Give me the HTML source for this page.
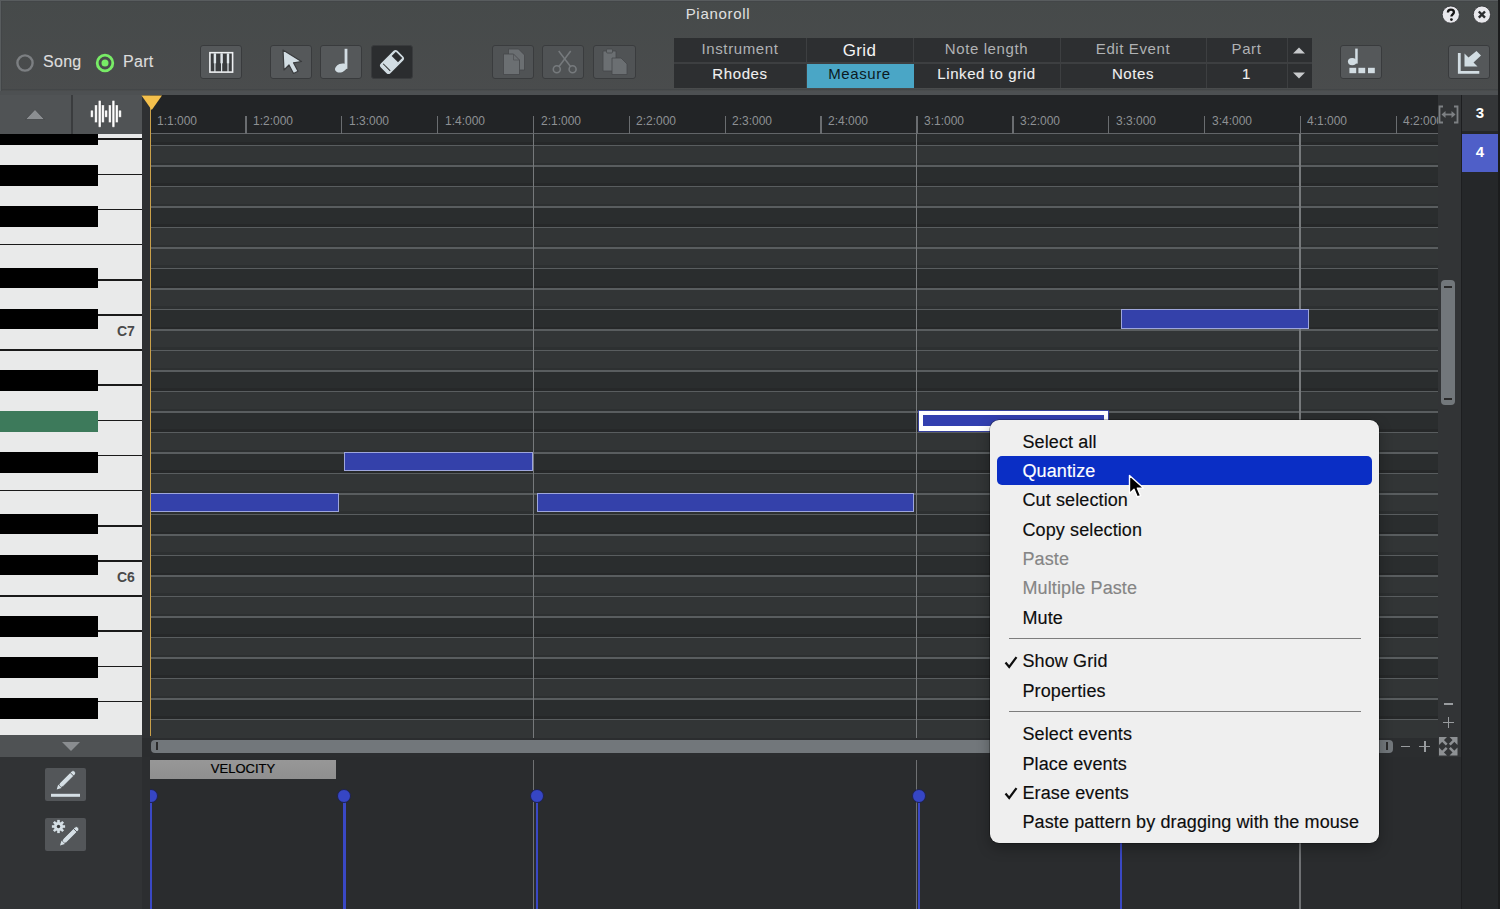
<!DOCTYPE html><html><head><meta charset="utf-8"><style>
*{margin:0;padding:0;box-sizing:border-box}
html,body{width:1500px;height:909px;overflow:hidden;background:#232527;font-family:"Liberation Sans",sans-serif}
body>div,body>svg{position:absolute}
.t{position:absolute;white-space:nowrap}
</style></head><body>
<div style="left:0px;top:0px;width:1498px;height:95px;background:linear-gradient(#464a4a,#4a4c4d)"></div>
<div style="left:0px;top:89px;width:1498px;height:1.2px;background:#434648"></div>
<div style="left:0px;top:0px;width:1498px;height:1px;background:#585c5e"></div>
<div style="left:0px;top:1px;width:1498px;height:1.2px;background:#434648"></div>
<div style="left:0px;top:0px;width:1px;height:95px;background:#585c5e"></div>
<div style="left:1px;top:1px;width:1.2px;height:94px;background:#434648"></div>
<div style="left:0px;top:90.5px;width:1498px;height:4px;background:#4d5052"></div>
<div class="t" style="left:0;width:1436px;top:5px;text-align:center;font-size:15px;letter-spacing:0.7px;color:#e0e0e0">Pianoroll</div>
<svg style="left:15px;top:53px" width="20" height="20"><circle cx="10" cy="10" r="7.6" fill="none" stroke="#7c7f82" stroke-width="2.4"/></svg>
<div class="t" style="left:43px;top:53px;font-size:16px;letter-spacing:0.3px;-webkit-text-stroke:0.15px #ddd;color:#dcdcdc">Song</div>
<svg style="left:95px;top:53px" width="20" height="20"><circle cx="10" cy="10" r="7.8" fill="none" stroke="#78ec66" stroke-width="2.8"/><circle cx="10" cy="10" r="3.5" fill="#78ec66"/></svg>
<div class="t" style="left:123px;top:53px;font-size:16px;letter-spacing:0.3px;-webkit-text-stroke:0.15px #ddd;color:#dcdcdc">Part</div>
<div style="left:200px;top:45px;width:42px;height:34px;background:#55585a;border:1.5px solid #393b3d;border-radius:3px"></div>
<svg style="left:205px;top:48px" width="32" height="28"><rect x="4.90" y="4.70" width="22.7" height="19.4" fill="#3a3c3e" stroke="#eef0f2" stroke-width="1.6"/><rect x="8.70" y="5.50" width="2.4" height="9.8" fill="#dfe6ea"/><rect x="9.30" y="5.50" width="1.2" height="18.6" fill="#dfe6ea"/><rect x="15.40" y="5.50" width="2.4" height="9.8" fill="#dfe6ea"/><rect x="16.00" y="5.50" width="1.2" height="18.6" fill="#dfe6ea"/><rect x="21.80" y="5.50" width="2.4" height="9.8" fill="#dfe6ea"/><rect x="22.40" y="5.50" width="1.2" height="18.6" fill="#dfe6ea"/></svg>
<div style="left:270px;top:45px;width:42px;height:34px;background:#55585a;border:1.5px solid #393b3d;border-radius:3px"></div>
<svg style="left:278px;top:45px" width="28" height="32"><polygon points="5,5 6,25 11,20 15.5,28.5 20,26.3 15.5,17.8 23.5,16.5" fill="#d2dde3" stroke="#3a3c3e" stroke-width="1.2" stroke-linejoin="round"/></svg>
<div style="left:320px;top:45px;width:42px;height:34px;background:#55585a;border:1.5px solid #393b3d;border-radius:3px"></div>
<svg style="left:330px;top:47px" width="22" height="28"><rect x="14.6" y="1.8" width="2.8" height="20" fill="#d2dde3"/><ellipse cx="11" cy="21" rx="6.3" ry="4.2" fill="#d2dde3" transform="rotate(-22 11 21)"/></svg>
<div style="left:371px;top:45px;width:42px;height:34px;background:#2b2d2f;border:1.5px solid #393b3d;border-radius:3px"></div>
<svg style="left:377px;top:48px" width="30" height="28"><g transform="rotate(-45 15 14)"><rect x="4" y="8" width="22" height="12" rx="2" fill="#d2dde3" stroke="#d2dde3" stroke-width="1.5"/><rect x="19" y="9.5" width="6" height="9" fill="#2b2d2f"/><line x1="7.5" y1="9" x2="7.5" y2="19" stroke="#2b2d2f" stroke-width="1"/></g></svg>
<div style="left:492px;top:45px;width:42px;height:34px;background:#505355;border:1px solid #3a3c3e;border-radius:3px"></div>
<svg style="left:500px;top:46px" width="30" height="32"><path d="M8.5 3 h10 l6 6 v15 h-16 z" fill="#6b6f72" stroke="#45484a" stroke-width="0.8"/><path d="M3.5 8 h10 l6 6 v14.5 h-16 z" fill="#6b6f72" stroke="#45484a" stroke-width="0.8"/><path d="M13.5 8 v6 h6" fill="none" stroke="#505355" stroke-width="0.8"/></svg>
<div style="left:542px;top:45px;width:42px;height:34px;background:#505355;border:1px solid #3a3c3e;border-radius:3px"></div>
<svg style="left:550px;top:48px" width="30" height="28"><line x1="8.7" y1="3" x2="20.5" y2="18.5" stroke="#767a7d" stroke-width="1.5"/><line x1="20.7" y1="3" x2="9" y2="18.5" stroke="#767a7d" stroke-width="1.5"/><circle cx="6.8" cy="21.2" r="3.5" fill="none" stroke="#767a7d" stroke-width="1.6"/><circle cx="22.6" cy="21.2" r="3.5" fill="none" stroke="#767a7d" stroke-width="1.6"/></svg>
<div style="left:593px;top:45px;width:43px;height:34px;background:#505355;border:1px solid #3a3c3e;border-radius:3px"></div>
<svg style="left:600px;top:46px" width="32" height="32"><path d="M3 5 h13 v20 h-13z" fill="#6b6f72" stroke="#45484a" stroke-width="0.8"/><rect x="6.5" y="3" width="6" height="4" rx="1" fill="#6b6f72" stroke="#45484a" stroke-width="0.8"/><path d="M12 12 h9 l6 6 v10.5 h-15z" fill="#6b6f72" stroke="#45484a" stroke-width="0.8"/></svg>
<div style="left:674px;top:37.5px;width:638px;height:50.5px;background:#2d2f31"></div>
<div style="left:674px;top:62px;width:638px;height:1.5px;background:#3d3f41"></div>
<div style="left:806px;top:37.5px;width:1px;height:50.5px;background:#3d3f41"></div>
<div style="left:913px;top:37.5px;width:1px;height:50.5px;background:#3d3f41"></div>
<div style="left:1060px;top:37.5px;width:1px;height:50.5px;background:#3d3f41"></div>
<div style="left:1206px;top:37.5px;width:1px;height:50.5px;background:#3d3f41"></div>
<div style="left:1287px;top:37.5px;width:1px;height:50.5px;background:#3d3f41"></div>
<div style="left:807px;top:63.8px;width:106.5px;height:24px;background:#4aa6c6"></div>
<div class="t" style="left:674px;width:132px;text-align:center;top:40px;font-size:15px;letter-spacing:0.6px;color:#b0b2b4">Instrument</div>
<div class="t" style="left:806px;width:107px;text-align:center;top:40.5px;font-size:17px;letter-spacing:0.3px;color:#f4f4f4">Grid</div>
<div class="t" style="left:913px;width:147px;text-align:center;top:40px;font-size:15px;letter-spacing:0.6px;color:#b0b2b4">Note length</div>
<div class="t" style="left:1060px;width:146px;text-align:center;top:40px;font-size:15px;letter-spacing:0.6px;color:#b0b2b4">Edit Event</div>
<div class="t" style="left:1206px;width:81px;text-align:center;top:40px;font-size:15px;letter-spacing:0.6px;color:#b0b2b4">Part</div>
<div class="t" style="left:674px;width:132px;text-align:center;top:65px;font-size:15px;letter-spacing:0.6px;-webkit-text-stroke:0.1px currentColor;color:#f0f0f0">Rhodes</div>
<div class="t" style="left:806px;width:107px;text-align:center;top:65px;font-size:15px;letter-spacing:0.6px;color:#0c1a22">Measure</div>
<div class="t" style="left:913px;width:147px;text-align:center;top:65px;font-size:15px;letter-spacing:0.6px;-webkit-text-stroke:0.1px currentColor;color:#f0f0f0">Linked to grid</div>
<div class="t" style="left:1060px;width:146px;text-align:center;top:65px;font-size:15px;letter-spacing:0.6px;-webkit-text-stroke:0.1px currentColor;color:#f0f0f0">Notes</div>
<div class="t" style="left:1206px;width:81px;text-align:center;top:65px;font-size:15px;letter-spacing:0.6px;-webkit-text-stroke:0.1px currentColor;color:#f0f0f0">1</div>
<svg style="left:1291px;top:45px" width="16" height="10"><polygon points="2,8.5 8,2.5 14,8.5" fill="#c8cacc"/></svg>
<svg style="left:1291px;top:70.5px" width="16" height="10"><polygon points="2,1.5 14,1.5 8,7.5" fill="#c8cacc"/></svg>
<div style="left:1340px;top:44.5px;width:42px;height:34.5px;background:#55585a;border:1.5px solid #393b3d;border-radius:3px"></div>
<svg style="left:1345px;top:47px" width="32" height="28"><rect x="10.2" y="1.6" width="2.5" height="15" fill="#d2dde3"/><ellipse cx="7.2" cy="14.6" rx="4.3" ry="3.6" fill="#d2dde3"/><rect x="4.4" y="20.8" width="6.8" height="5.4" fill="#d2dde3"/><rect x="13.4" y="20.8" width="6.8" height="5.4" fill="#d2dde3"/><rect x="23" y="20.8" width="6.8" height="5.4" fill="#d2dde3"/></svg>
<div style="left:1448px;top:44.5px;width:42px;height:34.5px;background:#55585a;border:1.5px solid #393b3d;border-radius:3px"></div>
<svg style="left:1455px;top:48px" width="30" height="28"><path d="M4.3 5 v19.3 h20" fill="none" stroke="#d2dde3" stroke-width="2.8"/><polygon points="21.5,3 26,7.5 18.5,14.5 22.5,18.5 9.5,18.5 9.5,5.5 13.5,9.5" fill="#d2dde3"/></svg>
<svg style="left:1441px;top:5px" width="20" height="20"><circle cx="9.8" cy="9.6" r="8.6" fill="#e8e8ec" stroke="#2e3032" stroke-width="0.8"/><path d="M6.9 7.6 C6.9 5.3 8.3 4.6 9.9 4.6 C11.7 4.6 12.9 5.7 12.9 7.2 C12.9 9.3 10.4 9.4 10.4 11.6" fill="none" stroke="#141414" stroke-width="2.3"/><circle cx="10.4" cy="14.6" r="1.4" fill="#141414"/></svg>
<svg style="left:1471.5px;top:5px" width="20" height="20"><circle cx="9.9" cy="9.6" r="8.6" fill="#e8e8ec" stroke="#2e3032" stroke-width="0.8"/><path d="M6.8 6.5 L13 12.7 M13 6.5 L6.8 12.7" stroke="#2a2c2e" stroke-width="2.4"/></svg>

<div style="left:0px;top:95px;width:142px;height:39px;background:#505355"></div>
<div style="left:71px;top:95px;width:2px;height:39px;background:#3a3c3e"></div>
<svg style="left:24px;top:108px" width="22" height="12"><polygon points="1.5,11.5 11,1.5 20.5,11.5" fill="#8b8e91" stroke="#45484a" stroke-width="0.8"/></svg>
<svg style="left:88px;top:98px" width="36" height="32"><rect x="2.600000000000006" y="12.299999999999997" width="2.6" height="7" rx="0.6" fill="#fff" stroke="rgba(20,20,20,0.35)" stroke-width="0.6"/><rect x="6.7" y="6.9999999999999964" width="2.6" height="17.6" rx="0.6" fill="#fff" stroke="rgba(20,20,20,0.35)" stroke-width="0.6"/><rect x="10.400000000000002" y="2.4499999999999975" width="2.6" height="26.7" rx="0.6" fill="#fff" stroke="rgba(20,20,20,0.35)" stroke-width="0.6"/><rect x="13.600000000000005" y="6.9999999999999964" width="2.6" height="17.6" rx="0.6" fill="#fff" stroke="rgba(20,20,20,0.35)" stroke-width="0.6"/><rect x="16.799999999999994" y="12.299999999999997" width="2.6" height="7" rx="0.6" fill="#fff" stroke="rgba(20,20,20,0.35)" stroke-width="0.6"/><rect x="20.600000000000005" y="6.9999999999999964" width="2.6" height="17.6" rx="0.6" fill="#fff" stroke="rgba(20,20,20,0.35)" stroke-width="0.6"/><rect x="24.100000000000005" y="2.4499999999999975" width="2.6" height="26.7" rx="0.6" fill="#fff" stroke="rgba(20,20,20,0.35)" stroke-width="0.6"/><rect x="27.499999999999996" y="6.9999999999999964" width="2.6" height="17.6" rx="0.6" fill="#fff" stroke="rgba(20,20,20,0.35)" stroke-width="0.6"/><rect x="30.7" y="12.299999999999997" width="2.6" height="7" rx="0.6" fill="#fff" stroke="rgba(20,20,20,0.35)" stroke-width="0.6"/></svg>
<div style="left:142px;top:95px;width:1296px;height:39px;background:#222426"></div>
<div style="left:150px;top:133.3px;width:1288px;height:1.3px;background:#626568"></div>
<div class="t" style="left:157px;top:113.8px;font-size:12px;color:#8e9194">1:1:000</div>
<div style="left:245.175px;top:116px;width:1.4px;height:18px;background:#6a6d70"></div>
<div class="t" style="left:253px;top:113.8px;font-size:12px;color:#8e9194">1:2:000</div>
<div style="left:341.05px;top:116px;width:1.4px;height:18px;background:#6a6d70"></div>
<div class="t" style="left:349px;top:113.8px;font-size:12px;color:#8e9194">1:3:000</div>
<div style="left:436.925px;top:116px;width:1.4px;height:18px;background:#6a6d70"></div>
<div class="t" style="left:445px;top:113.8px;font-size:12px;color:#8e9194">1:4:000</div>
<div style="left:532.8px;top:116px;width:1.4px;height:18px;background:#6a6d70"></div>
<div class="t" style="left:541px;top:113.8px;font-size:12px;color:#8e9194">2:1:000</div>
<div style="left:628.675px;top:116px;width:1.4px;height:18px;background:#6a6d70"></div>
<div class="t" style="left:636px;top:113.8px;font-size:12px;color:#8e9194">2:2:000</div>
<div style="left:724.55px;top:116px;width:1.4px;height:18px;background:#6a6d70"></div>
<div class="t" style="left:732px;top:113.8px;font-size:12px;color:#8e9194">2:3:000</div>
<div style="left:820.425px;top:116px;width:1.4px;height:18px;background:#6a6d70"></div>
<div class="t" style="left:828px;top:113.8px;font-size:12px;color:#8e9194">2:4:000</div>
<div style="left:916.3px;top:116px;width:1.4px;height:18px;background:#6a6d70"></div>
<div class="t" style="left:924px;top:113.8px;font-size:12px;color:#8e9194">3:1:000</div>
<div style="left:1012.175px;top:116px;width:1.4px;height:18px;background:#6a6d70"></div>
<div class="t" style="left:1020px;top:113.8px;font-size:12px;color:#8e9194">3:2:000</div>
<div style="left:1108.05px;top:116px;width:1.4px;height:18px;background:#6a6d70"></div>
<div class="t" style="left:1116px;top:113.8px;font-size:12px;color:#8e9194">3:3:000</div>
<div style="left:1203.925px;top:116px;width:1.4px;height:18px;background:#6a6d70"></div>
<div class="t" style="left:1212px;top:113.8px;font-size:12px;color:#8e9194">3:4:000</div>
<div style="left:1299.8px;top:116px;width:1.4px;height:18px;background:#6a6d70"></div>
<div class="t" style="left:1307px;top:113.8px;font-size:12px;color:#8e9194">4:1:000</div>
<div style="left:1395.675px;top:116px;width:1.4px;height:18px;background:#6a6d70"></div>
<div class="t" style="left:1403px;top:113.8px;font-size:12px;color:#8e9194">4:2:000</div>

<div style="left:150px;top:134px;width:1288px;height:604px;overflow:hidden;background:#2e3132"><div style="position:absolute;left:0;top:585.5px;width:1288px;height:18.5px;background:#323536"></div><div style="position:absolute;left:0;top:565.0px;width:1288px;height:20.5px;background:#2a2d2e"></div><div style="position:absolute;left:0;top:544.5px;width:1288px;height:20.5px;background:#323536"></div><div style="position:absolute;left:0;top:524.0px;width:1288px;height:20.5px;background:#2a2d2e"></div><div style="position:absolute;left:0;top:503.5px;width:1288px;height:20.5px;background:#323536"></div><div style="position:absolute;left:0;top:483.0px;width:1288px;height:20.5px;background:#2a2d2e"></div><div style="position:absolute;left:0;top:462.5px;width:1288px;height:20.5px;background:#323536"></div><div style="position:absolute;left:0;top:442.0px;width:1288px;height:20.5px;background:#323536"></div><div style="position:absolute;left:0;top:421.5px;width:1288px;height:20.5px;background:#2a2d2e"></div><div style="position:absolute;left:0;top:401.0px;width:1288px;height:20.5px;background:#323536"></div><div style="position:absolute;left:0;top:380.5px;width:1288px;height:20.5px;background:#2a2d2e"></div><div style="position:absolute;left:0;top:360.0px;width:1288px;height:20.5px;background:#323536"></div><div style="position:absolute;left:0;top:339.5px;width:1288px;height:20.5px;background:#323536"></div><div style="position:absolute;left:0;top:319.0px;width:1288px;height:20.5px;background:#2a2d2e"></div><div style="position:absolute;left:0;top:298.5px;width:1288px;height:20.5px;background:#323536"></div><div style="position:absolute;left:0;top:278.0px;width:1288px;height:20.5px;background:#2a2d2e"></div><div style="position:absolute;left:0;top:257.5px;width:1288px;height:20.5px;background:#323536"></div><div style="position:absolute;left:0;top:237.0px;width:1288px;height:20.5px;background:#2a2d2e"></div><div style="position:absolute;left:0;top:216.5px;width:1288px;height:20.5px;background:#323536"></div><div style="position:absolute;left:0;top:196.0px;width:1288px;height:20.5px;background:#323536"></div><div style="position:absolute;left:0;top:175.5px;width:1288px;height:20.5px;background:#2a2d2e"></div><div style="position:absolute;left:0;top:155.0px;width:1288px;height:20.5px;background:#323536"></div><div style="position:absolute;left:0;top:134.5px;width:1288px;height:20.5px;background:#2a2d2e"></div><div style="position:absolute;left:0;top:114.0px;width:1288px;height:20.5px;background:#323536"></div><div style="position:absolute;left:0;top:93.5px;width:1288px;height:20.5px;background:#323536"></div><div style="position:absolute;left:0;top:73.0px;width:1288px;height:20.5px;background:#2a2d2e"></div><div style="position:absolute;left:0;top:52.5px;width:1288px;height:20.5px;background:#323536"></div><div style="position:absolute;left:0;top:32.0px;width:1288px;height:20.5px;background:#2a2d2e"></div><div style="position:absolute;left:0;top:11.5px;width:1288px;height:20.5px;background:#323536"></div><div style="position:absolute;left:0;top:0px;width:1288px;height:11.5px;background:#2a2d2e"></div><div style="position:absolute;left:0;top:582.1px;width:1288px;height:2.5px;background:rgba(0,0,0,0.09)"></div><div style="position:absolute;left:0;top:584.6px;width:1288px;height:1.6px;background:#595d5f"></div><div style="position:absolute;left:0;top:561.6px;width:1288px;height:2.5px;background:rgba(0,0,0,0.09)"></div><div style="position:absolute;left:0;top:564.1px;width:1288px;height:1.6px;background:#595d5f"></div><div style="position:absolute;left:0;top:541.1px;width:1288px;height:2.5px;background:rgba(0,0,0,0.09)"></div><div style="position:absolute;left:0;top:543.6px;width:1288px;height:1.6px;background:#595d5f"></div><div style="position:absolute;left:0;top:520.6px;width:1288px;height:2.5px;background:rgba(0,0,0,0.09)"></div><div style="position:absolute;left:0;top:523.1px;width:1288px;height:1.6px;background:#595d5f"></div><div style="position:absolute;left:0;top:500.1px;width:1288px;height:2.5px;background:rgba(0,0,0,0.09)"></div><div style="position:absolute;left:0;top:502.6px;width:1288px;height:1.6px;background:#595d5f"></div><div style="position:absolute;left:0;top:479.6px;width:1288px;height:2.5px;background:rgba(0,0,0,0.09)"></div><div style="position:absolute;left:0;top:482.1px;width:1288px;height:1.6px;background:#595d5f"></div><div style="position:absolute;left:0;top:459.1px;width:1288px;height:2.5px;background:rgba(0,0,0,0.09)"></div><div style="position:absolute;left:0;top:461.6px;width:1288px;height:1.6px;background:#595d5f"></div><div style="position:absolute;left:0;top:438.6px;width:1288px;height:2.5px;background:rgba(0,0,0,0.09)"></div><div style="position:absolute;left:0;top:441.1px;width:1288px;height:1.6px;background:#595d5f"></div><div style="position:absolute;left:0;top:418.1px;width:1288px;height:2.5px;background:rgba(0,0,0,0.09)"></div><div style="position:absolute;left:0;top:420.6px;width:1288px;height:1.6px;background:#595d5f"></div><div style="position:absolute;left:0;top:397.6px;width:1288px;height:2.5px;background:rgba(0,0,0,0.09)"></div><div style="position:absolute;left:0;top:400.1px;width:1288px;height:1.6px;background:#595d5f"></div><div style="position:absolute;left:0;top:377.1px;width:1288px;height:2.5px;background:rgba(0,0,0,0.09)"></div><div style="position:absolute;left:0;top:379.6px;width:1288px;height:1.6px;background:#595d5f"></div><div style="position:absolute;left:0;top:356.6px;width:1288px;height:2.5px;background:rgba(0,0,0,0.09)"></div><div style="position:absolute;left:0;top:359.1px;width:1288px;height:1.6px;background:#595d5f"></div><div style="position:absolute;left:0;top:336.1px;width:1288px;height:2.5px;background:rgba(0,0,0,0.09)"></div><div style="position:absolute;left:0;top:338.6px;width:1288px;height:1.6px;background:#595d5f"></div><div style="position:absolute;left:0;top:315.6px;width:1288px;height:2.5px;background:rgba(0,0,0,0.09)"></div><div style="position:absolute;left:0;top:318.1px;width:1288px;height:1.6px;background:#595d5f"></div><div style="position:absolute;left:0;top:295.1px;width:1288px;height:2.5px;background:rgba(0,0,0,0.09)"></div><div style="position:absolute;left:0;top:297.6px;width:1288px;height:1.6px;background:#595d5f"></div><div style="position:absolute;left:0;top:274.6px;width:1288px;height:2.5px;background:rgba(0,0,0,0.09)"></div><div style="position:absolute;left:0;top:277.1px;width:1288px;height:1.6px;background:#595d5f"></div><div style="position:absolute;left:0;top:254.1px;width:1288px;height:2.5px;background:rgba(0,0,0,0.09)"></div><div style="position:absolute;left:0;top:256.6px;width:1288px;height:1.6px;background:#595d5f"></div><div style="position:absolute;left:0;top:233.6px;width:1288px;height:2.5px;background:rgba(0,0,0,0.09)"></div><div style="position:absolute;left:0;top:236.1px;width:1288px;height:1.6px;background:#595d5f"></div><div style="position:absolute;left:0;top:213.1px;width:1288px;height:2.5px;background:rgba(0,0,0,0.09)"></div><div style="position:absolute;left:0;top:215.6px;width:1288px;height:1.6px;background:#595d5f"></div><div style="position:absolute;left:0;top:192.6px;width:1288px;height:2.5px;background:rgba(0,0,0,0.09)"></div><div style="position:absolute;left:0;top:195.1px;width:1288px;height:1.6px;background:#595d5f"></div><div style="position:absolute;left:0;top:172.1px;width:1288px;height:2.5px;background:rgba(0,0,0,0.09)"></div><div style="position:absolute;left:0;top:174.6px;width:1288px;height:1.6px;background:#595d5f"></div><div style="position:absolute;left:0;top:151.6px;width:1288px;height:2.5px;background:rgba(0,0,0,0.09)"></div><div style="position:absolute;left:0;top:154.1px;width:1288px;height:1.6px;background:#595d5f"></div><div style="position:absolute;left:0;top:131.1px;width:1288px;height:2.5px;background:rgba(0,0,0,0.09)"></div><div style="position:absolute;left:0;top:133.6px;width:1288px;height:1.6px;background:#595d5f"></div><div style="position:absolute;left:0;top:110.6px;width:1288px;height:2.5px;background:rgba(0,0,0,0.09)"></div><div style="position:absolute;left:0;top:113.1px;width:1288px;height:1.6px;background:#595d5f"></div><div style="position:absolute;left:0;top:90.1px;width:1288px;height:2.5px;background:rgba(0,0,0,0.09)"></div><div style="position:absolute;left:0;top:92.6px;width:1288px;height:1.6px;background:#595d5f"></div><div style="position:absolute;left:0;top:69.6px;width:1288px;height:2.5px;background:rgba(0,0,0,0.09)"></div><div style="position:absolute;left:0;top:72.1px;width:1288px;height:1.6px;background:#595d5f"></div><div style="position:absolute;left:0;top:49.1px;width:1288px;height:2.5px;background:rgba(0,0,0,0.09)"></div><div style="position:absolute;left:0;top:51.6px;width:1288px;height:1.6px;background:#595d5f"></div><div style="position:absolute;left:0;top:28.6px;width:1288px;height:2.5px;background:rgba(0,0,0,0.09)"></div><div style="position:absolute;left:0;top:31.1px;width:1288px;height:1.6px;background:#595d5f"></div><div style="position:absolute;left:0;top:8.1px;width:1288px;height:2.5px;background:rgba(0,0,0,0.09)"></div><div style="position:absolute;left:0;top:10.6px;width:1288px;height:1.6px;background:#595d5f"></div></div>
<div style="left:532.5999999999999px;top:134px;width:1.4px;height:604px;background:#76797b"></div>
<div style="left:916.0999999999999px;top:134px;width:1.4px;height:604px;background:#76797b"></div>
<div style="left:1299.2px;top:134px;width:1.4px;height:604px;background:#76797b"></div>
<div style="left:150px;top:493.3px;width:188.7px;height:19.19999999999999px;background:#3441aa;border:1px solid #9ea6dc"></div>
<div style="left:343.8px;top:452.2px;width:189.7px;height:19.30000000000001px;background:#3441aa;border:1px solid #9ea6dc"></div>
<div style="left:537px;top:493.3px;width:377px;height:19.19999999999999px;background:#3441aa;border:1px solid #9ea6dc"></div>
<div style="left:919.3px;top:411px;width:189.0px;height:20px;background:#3340b0;border:solid #fff;border-width:4.6px 4px 5.2px 4px;box-shadow:0 0 0 0.8px #3a46b8"></div>
<div style="left:1120.8px;top:308.5px;width:188.70000000000005px;height:20.0px;background:#3441aa;border:1px solid #9ea6dc"></div>
<div style="left:142px;top:95px;width:8px;height:643px;background:#2e3032"></div>
<div style="left:149.5px;top:100px;width:1.5px;height:636px;background:#c9a04a"></div>
<svg style="left:141px;top:95px" width="22" height="16"><polygon points="0.5,0.5 21,0.5 10.75,15" fill="#f4c04c"/></svg>
<div style="left:0;top:134px;width:142px;height:601px;overflow:hidden;background:#e9eaea"><div style="position:absolute;left:0;top:4.392857142857139px;width:142px;height:1.6px;background:#1a1a1a"></div><div style="position:absolute;left:0;top:39.53571428571428px;width:142px;height:1.6px;background:#1a1a1a"></div><div style="position:absolute;left:0;top:74.67857142857142px;width:142px;height:1.6px;background:#1a1a1a"></div><div style="position:absolute;left:0;top:109.82142857142856px;width:142px;height:1.6px;background:#1a1a1a"></div><div style="position:absolute;left:0;top:144.96428571428572px;width:142px;height:1.6px;background:#1a1a1a"></div><div style="position:absolute;left:0;top:180.1071428571429px;width:142px;height:1.6px;background:#1a1a1a"></div><div style="position:absolute;left:0;top:215.25000000000006px;width:142px;height:1.6px;background:#1a1a1a"></div><div style="position:absolute;left:0;top:250.39285714285722px;width:142px;height:1.6px;background:#1a1a1a"></div><div style="position:absolute;left:0;top:285.5357142857144px;width:142px;height:1.6px;background:#1a1a1a"></div><div style="position:absolute;left:0;top:320.67857142857156px;width:142px;height:1.6px;background:#1a1a1a"></div><div style="position:absolute;left:0;top:355.8214285714287px;width:142px;height:1.6px;background:#1a1a1a"></div><div style="position:absolute;left:0;top:390.9642857142859px;width:142px;height:1.6px;background:#1a1a1a"></div><div style="position:absolute;left:0;top:426.107142857143px;width:142px;height:1.6px;background:#1a1a1a"></div><div style="position:absolute;left:0;top:461.2500000000001px;width:142px;height:1.6px;background:#1a1a1a"></div><div style="position:absolute;left:0;top:496.3928571428572px;width:142px;height:1.6px;background:#1a1a1a"></div><div style="position:absolute;left:0;top:531.5357142857143px;width:142px;height:1.6px;background:#1a1a1a"></div><div style="position:absolute;left:0;top:566.6785714285714px;width:142px;height:1.6px;background:#1a1a1a"></div><div style="position:absolute;left:0;top:601.8214285714286px;width:142px;height:1.6px;background:#1a1a1a"></div><div style="position:absolute;left:0;top:564.2px;width:97.6px;height:20.5px;background:#000"></div><div style="position:absolute;left:0;top:523.2px;width:97.6px;height:20.5px;background:#000"></div><div style="position:absolute;left:0;top:482.2px;width:97.6px;height:20.5px;background:#000"></div><div style="position:absolute;left:0;top:420.7px;width:97.6px;height:20.5px;background:#000"></div><div style="position:absolute;left:0;top:379.7px;width:97.6px;height:20.5px;background:#000"></div><div style="position:absolute;left:0;top:318.2px;width:97.6px;height:20.5px;background:#000"></div><div style="position:absolute;left:0;top:277.2px;width:97.6px;height:20.5px;background:#3d7a5b"></div><div style="position:absolute;left:0;top:236.2px;width:97.6px;height:20.5px;background:#000"></div><div style="position:absolute;left:0;top:174.7px;width:97.6px;height:20.5px;background:#000"></div><div style="position:absolute;left:0;top:133.7px;width:97.6px;height:20.5px;background:#000"></div><div style="position:absolute;left:0;top:72.2px;width:97.6px;height:20.5px;background:#000"></div><div style="position:absolute;left:0;top:31.2px;width:97.6px;height:20.5px;background:#000"></div><div style="position:absolute;left:0;top:-0.8px;width:97.6px;height:11.5px;background:#000"></div><div class="t" style="left:117px;top:189.0px;font-size:14px;font-weight:bold;color:#4a4a4a">C7</div><div class="t" style="left:117px;top:435.0px;font-size:14px;font-weight:bold;color:#4a4a4a">C6</div></div>
<div style="left:0px;top:735px;width:142px;height:22px;background:#4f5254"></div>
<svg style="left:60px;top:741px" width="22" height="11"><polygon points="2,1 20,1 11,10" fill="#8a8d90"/></svg>
<div style="left:142px;top:738px;width:1296px;height:20px;background:#2b2d2f"></div>
<div style="left:151px;top:739.5px;width:1242px;height:13px;background:#72777b;border-radius:4px"></div>
<div style="left:156px;top:742px;width:2px;height:8px;background:#2a2a2a"></div>
<div style="left:1401px;top:745.5px;width:8.6px;height:1.9px;background:#999c9f"></div>
<div style="left:1419px;top:745.5px;width:11px;height:1.9px;background:#999c9f"></div>
<div style="left:1423.7px;top:740.7px;width:1.9px;height:11px;background:#999c9f"></div>

<div style="left:1386px;top:742px;width:2px;height:8px;background:#2a2a2a"></div>
<div style="left:1438px;top:95px;width:23px;height:663px;background:#323436"></div>
<div style="left:1441.4px;top:280.2px;width:13.2px;height:125px;background:#72777b;border-radius:4px"></div>
<div style="left:1444px;top:286px;width:8px;height:2px;background:#2a2a2a"></div>
<div style="left:1444px;top:398px;width:8px;height:2px;background:#2a2a2a"></div>
<svg style="left:1438px;top:105px" width="21" height="19"><path d="M5 1.5 H1.5 V17.5 H5 M16 1.5 H19.5 V17.5 H16" fill="none" stroke="#7d8083" stroke-width="1.8"/><path d="M5 9.5 H16" stroke="#7d8083" stroke-width="1.8"/><polygon points="3.5,9.5 7.5,6 7.5,13" fill="#7d8083"/><polygon points="17.5,9.5 13.5,6 13.5,13" fill="#7d8083"/></svg>
<div style="left:1443.5px;top:703px;width:9px;height:1.9px;background:#999c9f"></div>
<div style="left:1443px;top:721.5px;width:10.5px;height:1.9px;background:#999c9f"></div>
<div style="left:1447.5px;top:717px;width:1.9px;height:10.5px;background:#999c9f"></div>

<svg style="left:1439.3px;top:737px" width="18.5" height="18.5"><g fill="#8e9194"><g transform="translate(9.25 9.25) rotate(0) translate(-9.25 -9.25)"><g><polygon points="0,0 8,0 0,8" /><polygon points="1.8,3.6 3.6,1.8 8.6,6.8 6.8,8.6"/></g></g><g transform="translate(9.25 9.25) rotate(90) translate(-9.25 -9.25)"><g><polygon points="0,0 8,0 0,8" /><polygon points="1.8,3.6 3.6,1.8 8.6,6.8 6.8,8.6"/></g></g><g transform="translate(9.25 9.25) rotate(180) translate(-9.25 -9.25)"><g><polygon points="0,0 8,0 0,8" /><polygon points="1.8,3.6 3.6,1.8 8.6,6.8 6.8,8.6"/></g></g><g transform="translate(9.25 9.25) rotate(270) translate(-9.25 -9.25)"><g><polygon points="0,0 8,0 0,8" /><polygon points="1.8,3.6 3.6,1.8 8.6,6.8 6.8,8.6"/></g></g></g></svg>
<div style="left:1461px;top:95px;width:37px;height:814px;background:#252729"></div>
<div style="left:1461px;top:95px;width:1px;height:814px;background:#1d1e20"></div>
<div style="left:1462px;top:95px;width:36px;height:36px;background:#343638"></div>
<div style="left:1462px;top:133.6px;width:36px;height:38.6px;background:#4f5fc8"></div>
<div class="t" style="left:1462px;width:36px;text-align:center;top:104px;font-size:15px;font-weight:bold;color:#fff">3</div>
<div class="t" style="left:1462px;width:36px;text-align:center;top:143px;font-size:15px;font-weight:bold;color:#fff">4</div>
<div style="left:1498px;top:0px;width:2px;height:909px;background:#1b1c1d"></div>
<div style="left:0px;top:757px;width:150px;height:152px;background:#313335"></div>
<div style="left:142px;top:757px;width:8px;height:152px;background:#2c2e30"></div>
<div style="left:150px;top:757px;width:1311px;height:152px;background:#2a2c2e"></div>
<div style="left:150px;top:760px;width:186px;height:19.4px;background:linear-gradient(#979797,#8f8f8f)"></div>
<div class="t" style="left:150px;width:186px;text-align:center;top:761px;font-size:13px;-webkit-text-stroke:0.2px #000;color:#000">VELOCITY</div>
<div style="left:532.5999999999999px;top:760px;width:1.4px;height:149px;background:#6f7173"></div>
<div style="left:916.0999999999999px;top:760px;width:1.4px;height:149px;background:#6f7173"></div>
<div style="left:1299.2px;top:760px;width:1.4px;height:149px;background:#6f7173"></div>
<div style="left:150px;top:757px;width:1311px;height:152px;overflow:hidden"><div style="position:absolute;left:-0.30000000000001137px;top:39px;width:2.2px;height:113px;background:#3a48c4"></div><div style="position:absolute;left:-6.300000000000011px;top:32px;width:14px;height:14px;border-radius:50%;background:#3646c4;border:1px solid #1e2250"></div><div style="position:absolute;left:193.39999999999998px;top:39px;width:2.2px;height:113px;background:#3a48c4"></div><div style="position:absolute;left:187.39999999999998px;top:32px;width:14px;height:14px;border-radius:50%;background:#3646c4;border:1px solid #1e2250"></div><div style="position:absolute;left:386.29999999999995px;top:39px;width:2.2px;height:113px;background:#3a48c4"></div><div style="position:absolute;left:380.29999999999995px;top:32px;width:14px;height:14px;border-radius:50%;background:#3646c4;border:1px solid #1e2250"></div><div style="position:absolute;left:768.3px;top:39px;width:2.2px;height:113px;background:#3a48c4"></div><div style="position:absolute;left:762.3px;top:32px;width:14px;height:14px;border-radius:50%;background:#3646c4;border:1px solid #1e2250"></div><div style="position:absolute;left:969.8px;top:39px;width:2.2px;height:113px;background:#3a48c4"></div><div style="position:absolute;left:963.8px;top:32px;width:14px;height:14px;border-radius:50%;background:#3646c4;border:1px solid #1e2250"></div></div>
<div style="left:44.6px;top:767.5px;width:41.3px;height:33px;background:#535659;border-radius:2px"></div>
<svg style="left:44px;top:767px" width="42" height="34"><g transform="translate(21.2 14) rotate(45)"><rect x="-2.4" y="-13.5" width="4.8" height="21" rx="2.2" fill="#d5dfe5" stroke="#3e4143" stroke-width="0.6"/><polygon points="-2.4,7.5 2.4,7.5 0,12" fill="#d5dfe5"/><line x1="-2.4" y1="-9.5" x2="2.4" y2="-9.5" stroke="#3e4143" stroke-width="0.8"/></g><rect x="7" y="26.8" width="29" height="3" fill="#d5dfe5"/></svg>
<div style="left:44.6px;top:817.7px;width:41.3px;height:33.8px;background:#535659;border-radius:2px"></div>
<svg style="left:44px;top:817px" width="42" height="34"><g transform="translate(14.5 9.5)"><rect x="-1.3" y="-6.6" width="2.6" height="3" transform="rotate(0)" fill="#d5dfe5"/><rect x="-1.3" y="-6.6" width="2.6" height="3" transform="rotate(45)" fill="#d5dfe5"/><rect x="-1.3" y="-6.6" width="2.6" height="3" transform="rotate(90)" fill="#d5dfe5"/><rect x="-1.3" y="-6.6" width="2.6" height="3" transform="rotate(135)" fill="#d5dfe5"/><rect x="-1.3" y="-6.6" width="2.6" height="3" transform="rotate(180)" fill="#d5dfe5"/><rect x="-1.3" y="-6.6" width="2.6" height="3" transform="rotate(225)" fill="#d5dfe5"/><rect x="-1.3" y="-6.6" width="2.6" height="3" transform="rotate(270)" fill="#d5dfe5"/><rect x="-1.3" y="-6.6" width="2.6" height="3" transform="rotate(315)" fill="#d5dfe5"/><circle r="4.6" fill="#d5dfe5"/><circle r="1.7" fill="#3a3c3e"/></g><g transform="translate(24.5 20) rotate(45)"><rect x="-2.4" y="-13.5" width="4.8" height="21" rx="2.2" fill="#d5dfe5" stroke="#3e4143" stroke-width="0.6"/><polygon points="-2.4,7.5 2.4,7.5 0,12" fill="#d5dfe5"/><line x1="-2.4" y1="-9.5" x2="2.4" y2="-9.5" stroke="#3e4143" stroke-width="0.8"/></g></svg>
<div style="left:990px;top:420px;width:389px;height:422.5px;background:#efefef;border-radius:9px;box-shadow:0 0 0 0.6px rgba(0,0,0,0.45),0 5px 14px rgba(0,0,0,0.3)"></div>
<div class="t" style="left:1022.5px;top:431.76px;line-height:20px;font-size:18px;letter-spacing:0.11px;-webkit-text-stroke:0.15px #0d0d0d;color:#0d0d0d">Select all</div>
<div style="left:997.3px;top:456.0px;width:374.7px;height:29.3px;background:#0a2ec5;border-radius:5px"></div>
<div class="t" style="left:1022.5px;top:461.06px;line-height:20px;font-size:18px;letter-spacing:0.11px;-webkit-text-stroke:0.15px #fff;color:#fff">Quantize</div>
<div class="t" style="left:1022.5px;top:490.36px;line-height:20px;font-size:18px;letter-spacing:0.11px;-webkit-text-stroke:0.15px #0d0d0d;color:#0d0d0d">Cut selection</div>
<div class="t" style="left:1022.5px;top:519.66px;line-height:20px;font-size:18px;letter-spacing:0.11px;-webkit-text-stroke:0.15px #0d0d0d;color:#0d0d0d">Copy selection</div>
<div class="t" style="left:1022.5px;top:548.9599999999999px;line-height:20px;font-size:18px;letter-spacing:0.11px;-webkit-text-stroke:0.15px #858585;color:#858585">Paste</div>
<div class="t" style="left:1022.5px;top:578.2599999999999px;line-height:20px;font-size:18px;letter-spacing:0.11px;-webkit-text-stroke:0.15px #858585;color:#858585">Multiple Paste</div>
<div class="t" style="left:1022.5px;top:607.5599999999998px;line-height:20px;font-size:18px;letter-spacing:0.11px;-webkit-text-stroke:0.15px #0d0d0d;color:#0d0d0d">Mute</div>
<div style="left:1009px;top:637.6999999999999px;width:351.5px;height:1.6px;background:#7d7d7d"></div>
<div class="t" style="left:1022.5px;top:651.2599999999998px;line-height:20px;font-size:18px;letter-spacing:0.11px;-webkit-text-stroke:0.15px #0d0d0d;color:#0d0d0d">Show Grid</div>
<svg style="left:1004px;top:655.4999999999998px" width="14" height="13"><path d="M1.5 6.5 L5.2 11 L12.5 1.2" fill="none" stroke="#0d0d0d" stroke-width="2.2" stroke-linejoin="miter"/></svg>
<div class="t" style="left:1022.5px;top:680.5599999999997px;line-height:20px;font-size:18px;letter-spacing:0.11px;-webkit-text-stroke:0.15px #0d0d0d;color:#0d0d0d">Properties</div>
<div style="left:1009px;top:710.6999999999998px;width:351.5px;height:1.6px;background:#7d7d7d"></div>
<div class="t" style="left:1022.5px;top:724.2599999999996px;line-height:20px;font-size:18px;letter-spacing:0.11px;-webkit-text-stroke:0.15px #0d0d0d;color:#0d0d0d">Select events</div>
<div class="t" style="left:1022.5px;top:753.5599999999996px;line-height:20px;font-size:18px;letter-spacing:0.11px;-webkit-text-stroke:0.15px #0d0d0d;color:#0d0d0d">Place events</div>
<div class="t" style="left:1022.5px;top:782.8599999999996px;line-height:20px;font-size:18px;letter-spacing:0.11px;-webkit-text-stroke:0.15px #0d0d0d;color:#0d0d0d">Erase events</div>
<svg style="left:1004px;top:787.0999999999996px" width="14" height="13"><path d="M1.5 6.5 L5.2 11 L12.5 1.2" fill="none" stroke="#0d0d0d" stroke-width="2.2" stroke-linejoin="miter"/></svg>
<div class="t" style="left:1022.5px;top:812.1599999999995px;line-height:20px;font-size:18px;letter-spacing:0.11px;-webkit-text-stroke:0.15px #0d0d0d;color:#0d0d0d">Paste pattern by dragging with the mouse</div>
<svg style="left:1128px;top:473.5px" width="20" height="26"><path d="M1.5 1.5 L1.5 19.5 L6 15.3 L9.3 23 L12.6 21.6 L9.4 14.2 L15.5 14 Z" fill="#000" stroke="#fff" stroke-width="1.4" stroke-linejoin="round"/></svg>
</body></html>
